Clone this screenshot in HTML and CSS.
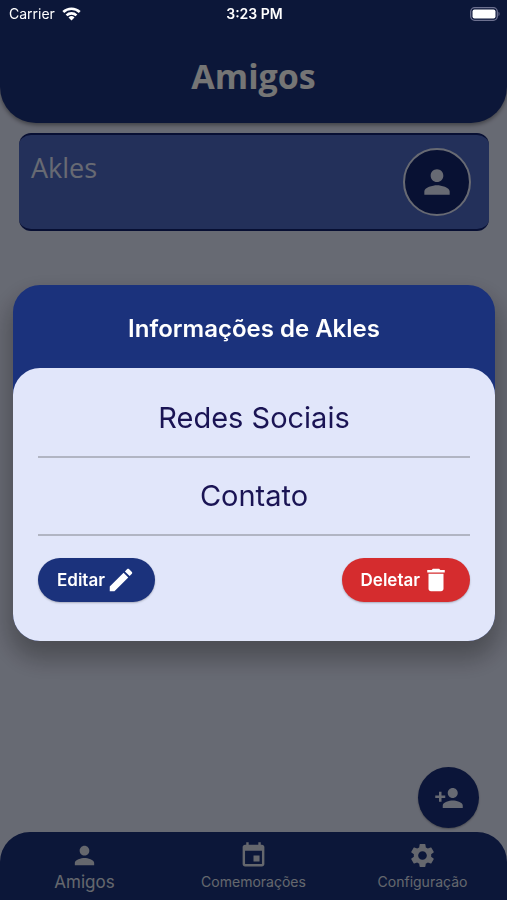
FILE: index.html
```html
<!DOCTYPE html>
<html lang="pt-BR">
<head>
<meta charset="utf-8">
<meta name="viewport" content="width=device-width, initial-scale=1">
<title>Amigos</title>
<link rel="stylesheet" href="styles.css">
</head>
<body>
<div class="status">
  <span class="carrier">Carrier
    <svg class="wifi" viewBox="0 0 20 15" aria-hidden="true"><g fill="none" stroke="currentColor" stroke-width="2.8"><path d="M1.2 5.4a12.6 12.6 0 0 1 17.6 0"/><path d="M4.7 9a7.6 7.6 0 0 1 10.6 0"/></g><path fill="currentColor" d="M10 14.5 6.8 11.2a4.6 4.6 0 0 1 6.4 0z"/></svg>
  </span>
  <span class="clock">3:23 PM</span>
  <svg class="battery" viewBox="0 0 30 14" aria-hidden="true"><rect x=".7" y=".7" width="26.6" height="12.6" rx="4" fill="none" stroke="#6d7190" stroke-width="1.3"/><rect x="2.5" y="2.5" width="23" height="9" rx="2" fill="#fff"/><path d="M28.5 4.8c1.4.6 1.4 3.8 0 4.4z" fill="#6d7190"/></svg>
</div>
<div class="app">
  <header class="topbar"><h1>Amigos</h1></header>
  <main class="content">
    <article class="friend">
      <h2>Akles</h2>
      <span class="avatar"><svg viewBox="0 0 24 24" aria-hidden="true"><path d="M12 12c2.21 0 4-1.79 4-4s-1.79-4-4-4-4 1.79-4 4 1.79 4 4 4zm0 2c-2.67 0-8 1.34-8 4v2h16v-2c0-2.66-5.33-4-8-4z"/></svg></span>
    </article>
  </main>
  <button class="fab" type="button" aria-label="Adicionar amigo"><svg viewBox="0 0 24 24" aria-hidden="true"><path d="M15 12c2.21 0 4-1.79 4-4s-1.79-4-4-4-4 1.79-4 4 1.79 4 4 4zm-9-2V7H4v3H1v2h3v3h2v-3h3v-2H6zm9 4c-2.67 0-8 1.34-8 4v2h16v-2c0-2.66-5.33-4-8-4z"/></svg></button>
  <nav class="tabs">
    <a class="tab active" href="#amigos"><svg viewBox="0 0 24 24" aria-hidden="true"><path d="M12 12c2.21 0 4-1.79 4-4s-1.79-4-4-4-4 1.79-4 4 1.79 4 4 4zm0 2c-2.67 0-8 1.34-8 4v2h16v-2c0-2.66-5.33-4-8-4z"/></svg>Amigos</a>
    <a class="tab" href="#comemoracoes"><svg viewBox="0 0 24 24" aria-hidden="true"><path d="M17 12h-5v5h5v-5zM16 1v2H8V1H6v2H5c-1.11 0-1.99.9-1.99 2L3 19c0 1.1.89 2 2 2h14c1.1 0 2-.9 2-2V5c0-1.1-.9-2-2-2h-1V1h-2zm3 18H5V8h14v11z"/></svg>Comemorações</a>
    <a class="tab" href="#configuracao"><svg viewBox="0 0 24 24" aria-hidden="true"><path d="M19.14 12.94c.04-.3.06-.61.06-.94 0-.32-.02-.64-.07-.94l2.03-1.58c.18-.14.23-.41.12-.61l-1.92-3.32c-.12-.22-.37-.29-.59-.22l-2.39.96c-.5-.38-1.03-.7-1.62-.94l-.36-2.54c-.04-.24-.24-.41-.48-.41h-3.84c-.24 0-.43.17-.47.41l-.36 2.54c-.59.24-1.13.57-1.62.94l-2.39-.96c-.22-.08-.47 0-.59.22L2.74 8.87c-.12.21-.08.47.12.61l2.03 1.58c-.05.3-.09.63-.09.94s.02.64.07.94l-2.03 1.58c-.18.14-.23.41-.12.61l1.92 3.32c.12.22.37.29.59.22l2.39-.96c.5.38 1.03.7 1.62.94l.36 2.54c.05.24.24.41.48.41h3.84c.24 0 .44-.17.47-.41l.36-2.54c.59-.24 1.13-.56 1.62-.94l2.39.96c.22.08.47 0 .59-.22l1.92-3.32c.12-.22.07-.47-.12-.61l-2.01-1.58zM12 15.6c-1.98 0-3.6-1.62-3.6-3.6s1.62-3.6 3.6-3.6 3.6 1.62 3.6 3.6-1.62 3.6-3.6 3.6z"/></svg>Configuração</a>
  </nav>
</div>
<div class="scrim">
  <section class="dialog" role="dialog" aria-modal="true" aria-labelledby="dialog-title">
    <h2 class="dialog-title" id="dialog-title">Informações de Akles</h2>
    <div class="dialog-body">
      <button class="row" type="button">Redes Sociais</button>
      <button class="row" type="button">Contato</button>
      <div class="actions">
        <button class="action" type="button">Editar<svg viewBox="0 0 24 24" aria-hidden="true"><path d="M3 17.25V21h3.75L17.81 9.94l-3.75-3.75L3 17.25zM20.71 7.04c.39-.39.39-1.02 0-1.41l-2.34-2.34c-.39-.39-1.02-.39-1.41 0l-1.83 1.83 3.75 3.75 1.83-1.83z"/></svg></button>
        <button class="action danger" type="button">Deletar<svg viewBox="0 0 24 24" aria-hidden="true"><path d="M6 19c0 1.1.9 2 2 2h8c1.1 0 2-.9 2-2V7H6v12zM19 4h-3.5l-1-1h-5l-1 1H5v2h14V4z"/></svg></button>
      </div>
    </div>
  </section>
</div>
</body>
</html>
```
FILE: styles.css
```css
:root {
  --navy: #1b327c;
  --pale: #e1e6fa;
}
* { box-sizing: border-box; }
body {
  margin: 0;
  font-family: Inter, "Liberation Sans", sans-serif;
  background: var(--pale);
}
h1, h2 { margin: 0; }
button { border: 0; font: inherit; cursor: pointer; }
svg { display: block; fill: currentColor; }

.status {
  position: fixed;
  inset: 0 0 auto;
  z-index: 3;
  display: grid;
  grid-template-columns: 1fr auto 1fr;
  align-items: center;
  height: 27px;
  padding: 0 7px 0 9px;
  color: #fff;
  font-size: 14px;
}
.carrier { display: flex; align-items: center; gap: 7px; }
.wifi { width: 19px; height: 14px; }
.clock { font-weight: 600; }
.battery { width: 30px; height: 14px; justify-self: end; }

.app {
  display: flex;
  flex-direction: column;
  min-height: 100vh;
}
.topbar {
  padding: 52px 16px 23px;
  border-radius: 0 0 36px 36px;
  background: var(--navy);
  box-shadow: 0 2px 4px rgba(0, 0, 0, .4);
  color: #fff;
  text-align: center;
}
.topbar h1 { font: 700 34px/48px "Open Sans", sans-serif; }
.content { flex: 1; padding: 10px 18px 10px 19px; }
.friend {
  display: flex;
  justify-content: space-between;
  align-items: flex-start;
  padding: 13px 18px 13px 12px;
  border: solid #10216f;
  border-width: 2px 0;
  border-radius: 12px;
  background: #4d69c4;
  color: var(--pale);
}
.friend h2 { font: 400 27px/40px "Open Sans", sans-serif; }
.avatar {
  display: grid;
  place-items: center;
  width: 68px;
  height: 68px;
  border: 2px solid var(--pale);
  border-radius: 50%;
  background: #13256f;
}
.avatar svg { width: 38px; height: 38px; }
.fab {
  display: grid;
  place-items: center;
  align-self: flex-end;
  width: 61px;
  height: 61px;
  margin: 0 28px 4px;
  padding: 0;
  border-radius: 50%;
  background: #182f7c;
  box-shadow: 0 1px 2px rgba(0, 0, 0, .3);
  color: var(--pale);
}
.fab svg { width: 30px; height: 30px; }
.tabs {
  display: grid;
  grid-template-columns: repeat(3, 1fr);
  height: 68px;
  padding-top: 9px;
  border-radius: 30px 30px 0 0;
  background: var(--navy);
}
.tab {
  display: flex;
  flex-direction: column;
  align-items: center;
  color: #dce0ee;
  font-size: 14px;
  line-height: 24px;
  text-decoration: none;
}
.tab svg { width: 29px; height: 29px; }
.tab.active { font-size: 17px; }

.scrim {
  position: fixed;
  inset: 0;
  z-index: 2;
  display: grid;
  align-items: center;
  padding: 25px 12px 0 13px;
  background: rgba(0, 0, 0, .54);
}
.dialog {
  border-radius: 27px;
  background: var(--navy);
  box-shadow: 0 14px 24px 4px rgba(0, 0, 0, .28);
}
.dialog-title {
  padding: 28px 24px 23px;
  color: #fff;
  font-size: 24px;
  font-weight: 600;
  line-height: 32px;
  text-align: center;
}
.dialog-body {
  padding: 12px 25px 39px;
  border-radius: 27px;
  background: var(--pale);
}
.row {
  display: block;
  width: 100%;
  height: 78px;
  padding: 0;
  border-bottom: 2px solid #b1b5c3;
  background: none;
  color: #1a1454;
  font-size: 29px;
}
.actions {
  display: flex;
  justify-content: space-between;
  margin-top: 22px;
}
.action {
  display: flex;
  align-items: center;
  gap: 1px;
  height: 44px;
  padding: 0 19px;
  border-radius: 22px;
  background: var(--navy);
  box-shadow: 0 1px 2px rgba(0, 0, 0, .25);
  color: #fff;
  font-size: 17px;
  font-weight: 600;
}
.action svg { width: 30px; height: 30px; }
.danger { background: #d52c2e; }
```
